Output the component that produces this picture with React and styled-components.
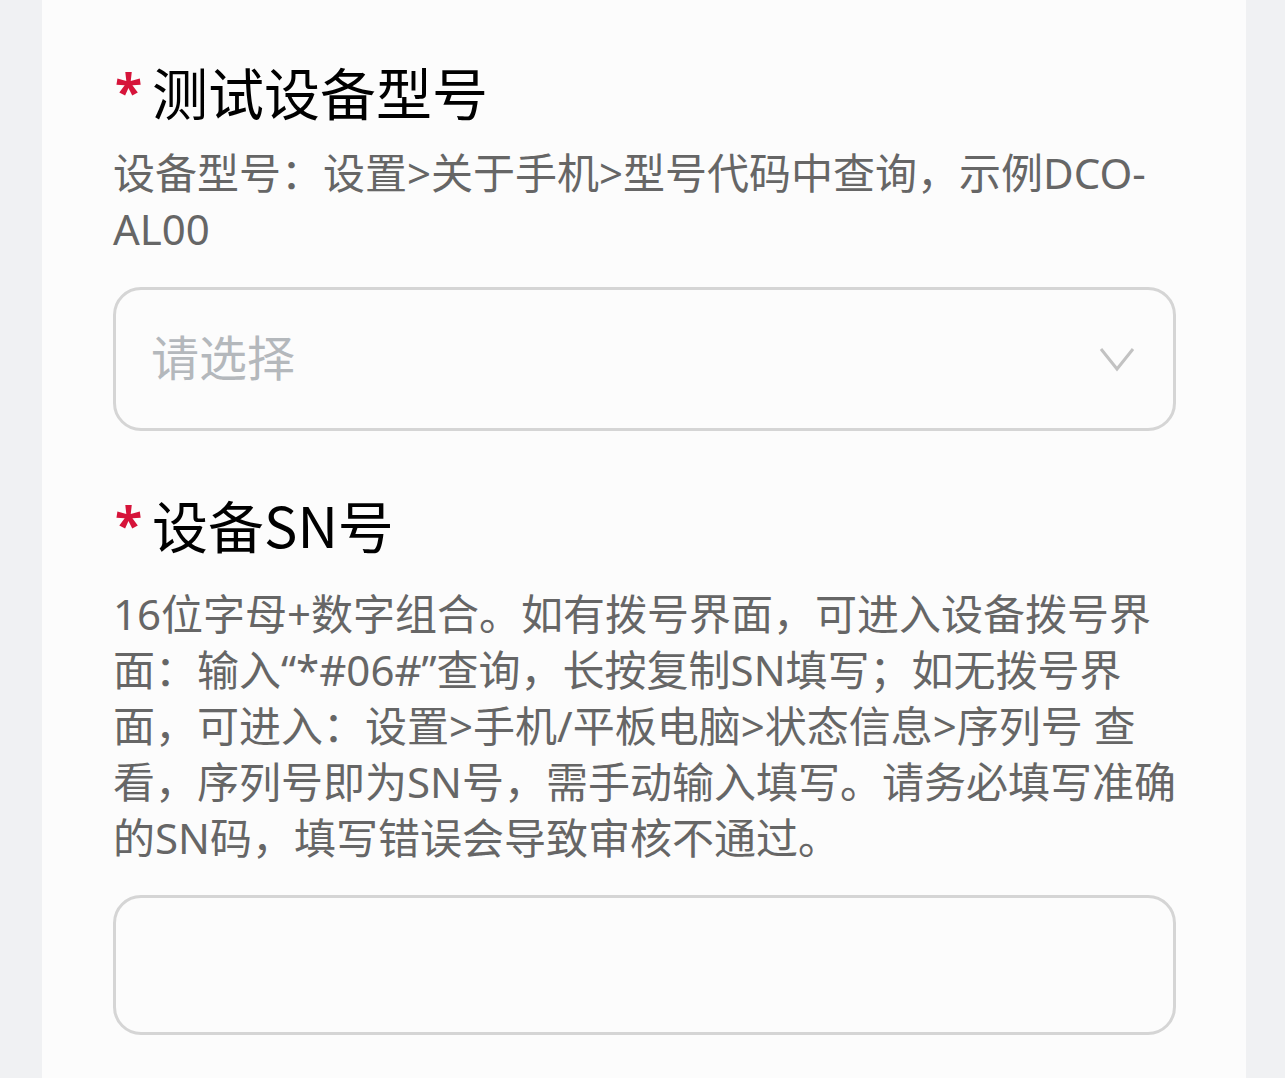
import styled, { createGlobalStyle } from 'styled-components'

const GlobalStyle = createGlobalStyle`
  html, body {
    margin: 0;
    padding: 0;
    background: #f0f1f3;
    font-family: "Noto Sans", "Noto Sans CJK SC", sans-serif;
  }
`;

const Page = styled.div`
  min-height: 1078px;
  padding: 0 39px 0 42px;
  display: flex;
  flex-direction: column;
`;

const Card = styled.div`
  flex: 1;
  background: #fcfcfc;
  padding: 53px 70px 40px 71px;
  display: flex;
  flex-direction: column;
`;

const Field = styled.div`
  display: flex;
  flex-direction: column;
  margin-bottom: ${({gap}) => gap || 0}px;
`;

const Label = styled.div`
  display: flex;
  align-items: center;
  font-family: "Noto Sans CJK SC", sans-serif;
  font-size: 56px;
  line-height: 76px;
  color: #000;
  margin-bottom: ${({space}) => space}px;
`;

const Star = styled.span`
  color: #d6143a;
  font-family: "Noto Sans", sans-serif;
  font-weight: 700;
  font-size: 50px;
  width: 39px;
  padding-left: 2px;
  box-sizing: border-box;
  align-self: flex-start;
  line-height: 76px;
`;

const Hint = styled.div`
  font-size: 42px;
  line-height: 56px;
  color: #666;
  margin-bottom: ${({space}) => space}px;
`;

const Box = styled.div`
  height: ${({h}) => h}px;
  box-sizing: border-box;
  border: 3px solid #d5d5d5;
  border-radius: 28px;
  display: flex;
  align-items: center;
  justify-content: space-between;
  padding: 0 38px 0 35px;
`;

const Placeholder = styled.span`
  font-family: "Noto Sans CJK SC", sans-serif;
  font-size: 48px;
  line-height: 64px;
  color: #b4b8bc;
  margin-bottom: 8px;
`;

const Chevron = () => (
  <svg width="36" height="26" viewBox="0 0 36 26">
    <polyline points="2,3 18,23 34,3" fill="none" stroke="#c2c2c2" strokeWidth="3" />
  </svg>
);

export default function App() {
  return (
    <>
      <GlobalStyle />
      <Page>
        <Card>
          <Field gap={55}>
            <Label space={16}><Star>*</Star>测试设备型号</Label>
            <Hint space={30}>设备型号：设置&gt;关于手机&gt;型号代码中查询，示例DCO-AL00</Hint>
            <Box h={144}>
              <Placeholder>请选择</Placeholder>
              <Chevron />
            </Box>
          </Field>
          <Field>
            <Label space={24}><Star>*</Star>设备SN号</Label>
            <Hint space={29}>16位字母+数字组合。如有拨号界面，可进入设备拨号界面：输入“*#06#”查询，长按复制SN填写；如无拨号界面，可进入：设置&gt;手机/平板电脑&gt;状态信息&gt;序列号 查看，序列号即为SN号，需手动输入填写。请务必填写准确的SN码，填写错误会导致审核不通过。</Hint>
            <Box h={140} />
          </Field>
        </Card>
      </Page>
    </>
  );
}
